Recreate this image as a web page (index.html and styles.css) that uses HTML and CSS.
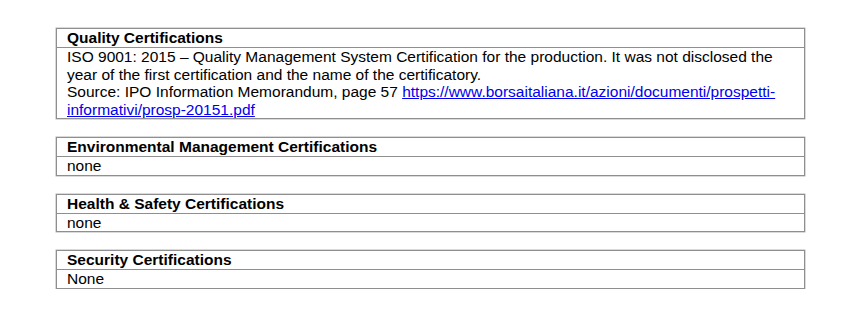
FILE: index.html
```html
<!DOCTYPE html>
<html lang="en">
<head>
  <meta charset="UTF-8" />
  <title>Certifications</title>
  <link rel="stylesheet" href="styles.css">
</head>
<body>
  <main class="certs">

    <!-- Quality -->
    <section class="cert">
      <h2 class="cert-title">Quality Certifications</h2>
      <div class="cert-body">
        ISO 9001: 2015 – Quality Management System Certification for the production. It was not disclosed the
        year of the first certification and the name of the certificatory.<br>
        Source: IPO Information Memorandum, page 57 <a href="#">https://www.borsaitaliana.it/azioni/documenti/prospetti-<wbr>informativi/prosp-20151.pdf</a>
      </div>
    </section>

    <!-- Environmental -->
    <section class="cert">
      <h2 class="cert-title">Environmental Management Certifications</h2>
      <div class="cert-body">none</div>
    </section>

    <!-- Health & Safety -->
    <section class="cert">
      <h2 class="cert-title">Health &amp; Safety Certifications</h2>
      <div class="cert-body">none</div>
    </section>

    <!-- Security -->
    <section class="cert">
      <h2 class="cert-title">Security Certifications</h2>
      <div class="cert-body">None</div>
    </section>

  </main>
</body>
</html>
```

FILE: styles.css
```css
body        {margin:0; background:#fff; font-family:"Liberation Sans", Arial, sans-serif; color:#000;}
.certs      {padding:28px 0 0 56px; width:749px; display:flex; flex-direction:column; gap:18px;}
.cert       {border:1px solid #8f8f8f; box-shadow:0 0 0 0.5px #b5b5b5;}
.cert-title {margin:0; padding:0 10px; font-size:15.5px; font-weight:bold; line-height:18px; border-bottom:1px solid #8f8f8f;}
.cert-body  {padding:0 10px; font-size:15.5px; line-height:17.5px;}
.cert-body a {color:#0000ee;}
```
